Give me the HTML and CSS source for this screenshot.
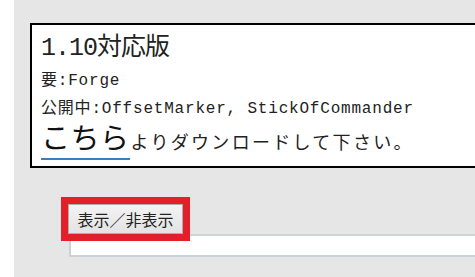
FILE: index.html
```html
<!DOCTYPE html>
<html lang="ja">
<head>
    <meta charset="UTF-8">
    <meta name="viewport" content="width=device-width, initial-scale=1.0">
    <title>1.10対応版</title>
    <link rel="stylesheet" href="styles.css">
</head>
<body>

    <div class="side"></div>

    <div class="main">
        <!-- 配布情報 -->
        <div class="card">
            <h1>1.10対応版</h1>
            <p class="info">要:Forge</p>
            <p class="info">公開中:OffsetMarker, StickOfCommander</p>
            <p class="download"><a href="#">こちら</a>よりダウンロードして下さい。</p>
        </div>

        <div class="tools">
            <button class="toggle">表示／非表示</button>
            <div class="panel"></div>
        </div>
    </div>

</body>
</html>
```

FILE: styles.css
```css
/* 基本 */
* {
    margin: 0;
    padding: 0;
    box-sizing: border-box;
}

body {
    display: flex;
    height: 277px;
    overflow: hidden;
    background: #fff;
    font-family: "Liberation Mono", "Noto Sans CJK JP", monospace;
    color: #222;
}

.side {
    width: 14px;
    flex-shrink: 0;
}

.main {
    flex: 1;
    min-width: 0;
    overflow: hidden;
    background: #e6e6e6;
    padding: 23px 0 0 16px;
}

.card {
    width: 520px;
    background: #fff;
    border: 2px solid #000;
    padding: 6px 9px 3px;
}

h1 {
    font-size: 25px;
    font-weight: normal;
    line-height: 36px;
    letter-spacing: -1px;
}

.info {
    font-size: 16px;
    line-height: 28px;
    letter-spacing: 0.8px;
}

.download {
    font-size: 18px;
    line-height: 38px;
    letter-spacing: 2.3px;
}

.download a {
    font-size: 29px;
    color: #111;
    text-decoration: none;
    border-bottom: 2px solid #3d7dbf;
    margin-right: 1px;
    letter-spacing: 0.5px;
}

.tools {
    margin-top: 36px;
    padding-left: 38px;
}

.toggle {
    display: block;
    width: 115px;
    height: 30px;
    font-family: "Noto Sans CJK JP", sans-serif;
    font-size: 16px;
    color: #222;
    background: linear-gradient(#f3f3f3, #e3e3e3);
    border: 1px solid #adadad;
    border-radius: 0;
    outline: 7px solid #e3202a;
    position: relative;
    z-index: 1;
}

.panel {
    width: 480px;
    height: 23px;
    margin-left: 1px;
    background: #fff;
    border: 2px solid #cdd1d8;
}
```
